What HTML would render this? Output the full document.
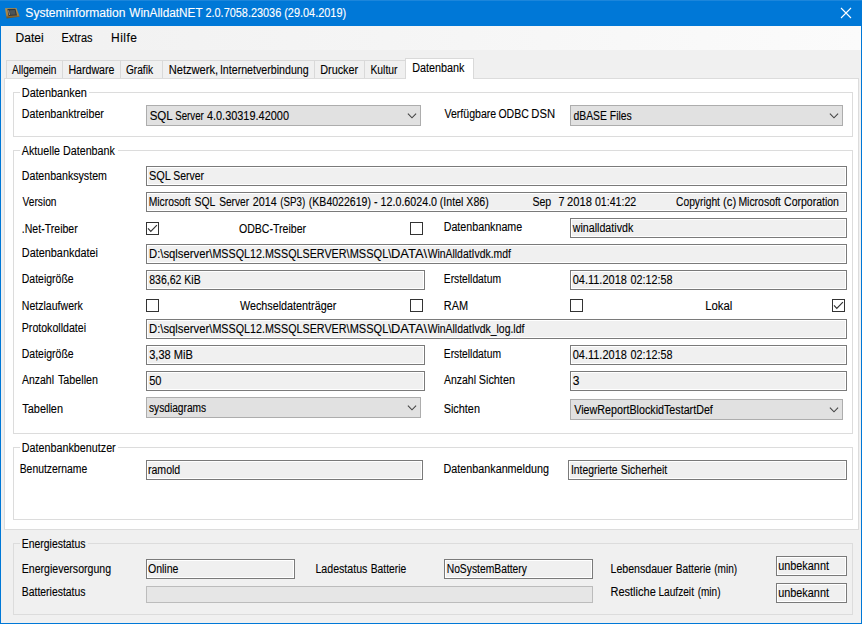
<!DOCTYPE html>
<html><head><meta charset="utf-8"><title>Systeminformation WinAlldatNET</title><style>html,body{margin:0;padding:0}body{width:862px;height:624px;overflow:hidden;position:relative;font-family:"Liberation Sans",sans-serif;background:#f0f0f0}
div,svg,.t{position:absolute;box-sizing:content-box}
.t{white-space:pre;line-height:16px;height:16px;transform-origin:0 0;display:block;-webkit-text-stroke:0.12px currentColor}</style></head><body>
<div style="left:0px;top:0px;width:862px;height:624px;background:#f0f0f0;"></div>
<div style="left:0px;top:0px;width:862px;height:26px;background:#0078d7;"></div>
<div style="left:0px;top:0px;width:862px;height:1px;background:#1c86db;"></div>
<div style="left:1px;top:26px;width:860px;height:24px;background:linear-gradient(to right,#f1f1f1 0,#f5f5f5 45%,#fbfbfb 100%);"></div>
<div style="left:0px;top:26px;width:1px;height:598px;background:#0078d7;"></div>
<div style="left:861px;top:26px;width:1px;height:598px;background:#0078d7;"></div>
<div style="left:0px;top:623px;width:862px;height:1px;background:#0078d7;"></div>
<svg style="left:3px;top:6px" width="18" height="14" viewBox="3 6 18 14"><defs><linearGradient id="ig" x1="0" y1="0" x2="0" y2="1"><stop offset="0" stop-color="#b49354"/><stop offset=".7" stop-color="#a47f40"/><stop offset=".85" stop-color="#7d5e2c"/><stop offset="1" stop-color="#6b4f22"/></linearGradient></defs><polygon points="5.0,8.3 16.4,7.9 19.7,16.8 6.6,18.4" fill="url(#ig)"/><polygon points="7.4,9.1 15.5,8.8 17.0,15.5 8.5,16.1" fill="#33373b"/><polygon points="9.8,10.2 14.8,10.0 15.6,14.4 10.4,14.8" fill="#4c5458"/><polygon points="8.3,10.4 9.0,10.3 9.8,15.0 9.1,15.1" fill="#d8dce0" opacity=".7"/></svg>
<svg style="left:838px;top:5px" width="16" height="16" viewBox="838 5 16 16"><path d="M841 8 L851 18 M851 8 L841 18" stroke="#fff" stroke-width="1.1" fill="none"/></svg>
<div style="left:4px;top:78px;width:853px;height:450px;background:#fff;border:1px solid #dcdcdc;"></div>
<div style="left:6px;top:60px;width:399px;height:17px;border:1px solid #d9d9d9;border-bottom:none;background:#f0f0f0;"></div>
<div style="left:62px;top:61px;width:1px;height:17px;background:#d9d9d9;"></div>
<div style="left:120px;top:61px;width:1px;height:17px;background:#d9d9d9;"></div>
<div style="left:162px;top:61px;width:1px;height:17px;background:#d9d9d9;"></div>
<div style="left:314px;top:61px;width:1px;height:17px;background:#d9d9d9;"></div>
<div style="left:364px;top:61px;width:1px;height:17px;background:#d9d9d9;"></div>
<div style="left:405px;top:58px;width:67px;height:20px;border:1px solid #d9d9d9;border-bottom:none;background:#fff;"></div>
<div style="left:13px;top:92px;width:838px;height:43px;border:1px solid #dcdcdc;"></div>
<div style="left:20px;top:92px;width:69px;height:1px;background:#fff;"></div>
<div style="left:146px;top:105px;width:273px;height:19px;border:1px solid #adadad;background:#e1e1e1;"></div>
<svg style="left:406px;top:111px" width="12" height="10" viewBox="0 0 12 10"><path d="M1.9 2.6 L6 6.8 L10.1 2.6" fill="none" stroke="#444" stroke-width="1.1"/></svg>
<div style="left:570px;top:105px;width:271px;height:19px;border:1px solid #adadad;background:#e1e1e1;"></div>
<svg style="left:828px;top:111px" width="12" height="10" viewBox="0 0 12 10"><path d="M1.9 2.6 L6 6.8 L10.1 2.6" fill="none" stroke="#444" stroke-width="1.1"/></svg>
<div style="left:13px;top:150px;width:838px;height:282px;border:1px solid #dcdcdc;"></div>
<div style="left:20px;top:150px;width:98px;height:1px;background:#fff;"></div>
<div style="left:146px;top:166px;width:699px;height:18px;border:1px solid #7a7a7a;background:#f0f0f0;box-shadow:inset 0 0 0 1px #fff;"></div>
<div style="left:146px;top:192px;width:699px;height:18px;border:1px solid #7a7a7a;background:#f0f0f0;box-shadow:inset 0 0 0 1px #fff;"></div>
<div style="left:146px;top:222px;width:11px;height:11px;border:1px solid #333;background:#fff;"></div>
<svg style="left:146px;top:222px" width="13" height="13" viewBox="0 0 13 13"><path d="M2.0 6.3 L4.8 9.3 L10.9 3.2" fill="none" stroke="#333" stroke-width="1.2"/></svg>
<div style="left:410px;top:222px;width:11px;height:11px;border:1px solid #333;background:#fff;"></div>
<div style="left:570px;top:218px;width:275px;height:18px;border:1px solid #7a7a7a;background:#f0f0f0;box-shadow:inset 0 0 0 1px #fff;"></div>
<div style="left:146px;top:244px;width:699px;height:18px;border:1px solid #7a7a7a;background:#f0f0f0;box-shadow:inset 0 0 0 1px #fff;"></div>
<div style="left:146px;top:270px;width:277px;height:18px;border:1px solid #7a7a7a;background:#f0f0f0;box-shadow:inset 0 0 0 1px #fff;"></div>
<div style="left:570px;top:270px;width:275px;height:18px;border:1px solid #7a7a7a;background:#f0f0f0;box-shadow:inset 0 0 0 1px #fff;"></div>
<div style="left:146px;top:299px;width:11px;height:11px;border:1px solid #333;background:#fff;"></div>
<div style="left:410px;top:299px;width:11px;height:11px;border:1px solid #333;background:#fff;"></div>
<div style="left:570px;top:299px;width:11px;height:11px;border:1px solid #333;background:#fff;"></div>
<div style="left:832px;top:299px;width:11px;height:11px;border:1px solid #333;background:#fff;"></div>
<svg style="left:832px;top:299px" width="13" height="13" viewBox="0 0 13 13"><path d="M2.0 6.3 L4.8 9.3 L10.9 3.2" fill="none" stroke="#333" stroke-width="1.2"/></svg>
<div style="left:146px;top:319px;width:699px;height:18px;border:1px solid #7a7a7a;background:#f0f0f0;box-shadow:inset 0 0 0 1px #fff;"></div>
<div style="left:146px;top:345px;width:277px;height:18px;border:1px solid #7a7a7a;background:#f0f0f0;box-shadow:inset 0 0 0 1px #fff;"></div>
<div style="left:570px;top:345px;width:275px;height:18px;border:1px solid #7a7a7a;background:#f0f0f0;box-shadow:inset 0 0 0 1px #fff;"></div>
<div style="left:146px;top:371px;width:277px;height:18px;border:1px solid #7a7a7a;background:#f0f0f0;box-shadow:inset 0 0 0 1px #fff;"></div>
<div style="left:570px;top:371px;width:275px;height:18px;border:1px solid #7a7a7a;background:#f0f0f0;box-shadow:inset 0 0 0 1px #fff;"></div>
<div style="left:146px;top:397px;width:273px;height:19px;border:1px solid #adadad;background:#e1e1e1;"></div>
<svg style="left:406px;top:403px" width="12" height="10" viewBox="0 0 12 10"><path d="M1.9 2.6 L6 6.8 L10.1 2.6" fill="none" stroke="#444" stroke-width="1.1"/></svg>
<div style="left:570px;top:399px;width:271px;height:19px;border:1px solid #adadad;background:#e1e1e1;"></div>
<svg style="left:828px;top:405px" width="12" height="10" viewBox="0 0 12 10"><path d="M1.9 2.6 L6 6.8 L10.1 2.6" fill="none" stroke="#444" stroke-width="1.1"/></svg>
<div style="left:13px;top:447px;width:838px;height:71px;border:1px solid #dcdcdc;"></div>
<div style="left:20px;top:447px;width:98px;height:1px;background:#fff;"></div>
<div style="left:146px;top:460px;width:275px;height:18px;border:1px solid #7a7a7a;background:#f0f0f0;box-shadow:inset 0 0 0 1px #fff;"></div>
<div style="left:568px;top:460px;width:277px;height:18px;border:1px solid #7a7a7a;background:#f0f0f0;box-shadow:inset 0 0 0 1px #fff;"></div>
<div style="left:13px;top:543px;width:838px;height:70px;border:1px solid #dcdcdc;"></div>
<div style="left:20px;top:543px;width:68px;height:1px;background:#f0f0f0;"></div>
<div style="left:146px;top:559px;width:147px;height:18px;border:1px solid #7a7a7a;background:#f0f0f0;box-shadow:inset 0 0 0 1px #fff;"></div>
<div style="left:444px;top:559px;width:147px;height:18px;border:1px solid #7a7a7a;background:#f0f0f0;box-shadow:inset 0 0 0 1px #fff;"></div>
<div style="left:776px;top:556px;width:69px;height:18px;border:1px solid #7a7a7a;background:#f0f0f0;box-shadow:inset 0 0 0 1px #fff;"></div>
<div style="left:146px;top:586px;width:445px;height:15px;border:1px solid #bcbcbc;background:#e6e6e6;"></div>
<div style="left:776px;top:583px;width:69px;height:18px;border:1px solid #7a7a7a;background:#f0f0f0;box-shadow:inset 0 0 0 1px #fff;"></div>
<span class="t" id="t0" style="left:25px;font-size:12px;color:#fff;top:5px;transform:translateX(0.34px) scaleX(1.0080);">Systeminformation</span>
<span class="t" id="t1" style="left:129px;font-size:12px;color:#fff;top:5px;transform:translateX(0.25px) scaleX(0.9834);">WinAlldatNET</span>
<span class="t" id="t2" style="left:205px;font-size:12px;color:#fff;top:5px;transform:translateX(0.44px) scaleX(0.9088);">2.0.7058.23036</span>
<span class="t" id="t3" style="left:284px;font-size:12px;color:#fff;top:5px;transform:translateX(0.24px) scaleX(0.9091);">(29.04.2019)</span>
<span class="t" id="t4" style="left:15px;font-size:12px;color:#000;top:30px;transform:translateX(0.55px) scaleX(1.0027);">Datei</span>
<span class="t" id="t5" style="left:61px;font-size:12px;color:#000;top:30px;transform:translateX(0.56px) scaleX(0.9114);">Extras</span>
<span class="t" id="t6" style="left:111px;font-size:12px;color:#000;letter-spacing:0.45px;top:30px;transform:translateX(0.03px) scaleX(1.0005);">Hilfe</span>
<span class="t" id="t7" style="left:11px;font-size:12.5px;color:#000;top:62px;transform:translateX(0.95px) scaleX(0.8109);">Allgemein</span>
<span class="t" id="t8" style="left:68px;font-size:12.5px;color:#000;top:62px;transform:translateX(0.43px) scaleX(0.8496);">Hardware</span>
<span class="t" id="t9" style="left:125px;font-size:12.5px;color:#000;top:62px;transform:translateX(0.94px) scaleX(0.8100);">Grafik</span>
<span class="t" id="t10" style="left:168px;font-size:12.5px;color:#000;top:62px;transform:translateX(0.67px) scaleX(0.8909);">Netzwerk,</span>
<span class="t" id="t11" style="left:219px;font-size:12.5px;color:#000;top:62px;transform:translateX(0.88px) scaleX(0.8521);">Internetverbindung</span>
<span class="t" id="t12" style="left:320px;font-size:12.5px;color:#000;top:62px;transform:translateX(0.18px) scaleX(0.8689);">Drucker</span>
<span class="t" id="t13" style="left:370px;font-size:12.5px;color:#000;top:62px;transform:translateX(0.43px) scaleX(0.8276);">Kultur</span>
<span class="t" id="t14" style="left:412px;font-size:12.5px;color:#000;top:60px;transform:translateX(0.19px) scaleX(0.8643);">Datenbank</span>
<span class="t" id="t15" style="left:21px;font-size:12.5px;color:#000;top:85px;transform:translateX(0.78px) scaleX(0.8758);">Datenbanken</span>
<span class="t" id="t16" style="left:21px;font-size:12.5px;color:#000;top:106px;transform:translateX(0.79px) scaleX(0.8567);">Datenbanktreiber</span>
<span class="t" id="t17" style="left:149px;font-size:12.5px;color:#000;top:108px;transform:translateX(0.63px) scaleX(0.9226);">SQL</span>
<span class="t" id="t18" style="left:175px;font-size:12.5px;color:#000;top:108px;transform:translateX(0.24px) scaleX(0.7757);">Server</span>
<span class="t" id="t19" style="left:206px;font-size:12.5px;color:#000;top:108px;transform:translateX(0.90px) scaleX(0.8744);">4.0.30319.42000</span>
<span class="t" id="t20" style="left:444px;font-size:12.5px;color:#000;top:106px;transform:translateX(0.45px) scaleX(0.8469);">Verfügbare</span>
<span class="t" id="t21" style="left:498px;font-size:12.5px;color:#000;top:106px;transform:translateX(0.43px) scaleX(0.8424);">ODBC</span>
<span class="t" id="t22" style="left:531px;font-size:12.5px;color:#000;top:106px;transform:translateX(0.25px) scaleX(0.9016);">DSN</span>
<span class="t" id="t23" style="left:573px;font-size:12.5px;color:#000;top:108px;transform:translateX(0.45px) scaleX(0.8302);">dBASE Files</span>
<span class="t" id="t24" style="left:21px;font-size:12.5px;color:#000;top:143px;transform:translateX(0.85px) scaleX(0.8579);">Aktuelle Datenbank</span>
<span class="t" id="t25" style="left:21px;font-size:12.5px;color:#000;top:168px;transform:translateX(0.79px) scaleX(0.8507);">Datenbanksystem</span>
<span class="t" id="t26" style="left:148px;font-size:12.5px;color:#000;top:168px;transform:translateX(0.93px) scaleX(0.8748);">SQL</span>
<span class="t" id="t27" style="left:173px;font-size:12.5px;color:#000;top:168px;transform:translateX(0.24px) scaleX(0.8382);">Server</span>
<span class="t" id="t28" style="left:22px;font-size:12.5px;color:#000;top:194px;transform:translateX(0.55px) scaleX(0.8132);">Version</span>
<span class="t" id="t29" style="left:148px;font-size:12.5px;color:#000;top:194px;transform:translateX(0.69px) scaleX(0.8257);">Microsoft</span>
<span class="t" id="t30" style="left:194px;font-size:12.5px;color:#000;top:194px;transform:translateX(0.53px) scaleX(0.8345);">SQL</span>
<span class="t" id="t31" style="left:219px;font-size:12.5px;color:#000;top:194px;transform:translateX(0.14px) scaleX(0.8164);">Server</span>
<span class="t" id="t32" style="left:252px;font-size:12.5px;color:#000;top:194px;transform:translateX(0.73px) scaleX(0.8620);">2014</span>
<span class="t" id="t33" style="left:280px;font-size:12.5px;color:#000;top:194px;transform:translateX(0.32px) scaleX(0.7809);">(SP3)</span>
<span class="t" id="t34" style="left:308px;font-size:12.5px;color:#000;top:194px;transform:translateX(0.84px) scaleX(0.8426);">(KB4022619)</span>
<span class="t" id="t35" style="left:374px;font-size:12.5px;color:#000;top:194px;transform:translateX(0.09px) scaleX(0.8546);">- 12.0.6024.0</span>
<span class="t" id="t36" style="left:439px;font-size:12.5px;color:#000;top:194px;transform:translateX(0.83px) scaleX(0.8478);">(Intel X86)</span>
<span class="t" id="t37" style="left:532px;font-size:12.5px;color:#000;top:194px;transform:translateX(0.42px) scaleX(0.8471);">Sep</span>
<span class="t" id="t38" style="left:558px;font-size:12.5px;color:#000;top:194px;transform:translateX(0.41px) scaleX(0.8642);">7</span>
<span class="t" id="t39" style="left:567px;font-size:12.5px;color:#000;top:194px;transform:translateX(0.03px) scaleX(0.8931);">2018</span>
<span class="t" id="t40" style="left:594px;font-size:12.5px;color:#000;top:194px;transform:translateX(0.89px) scaleX(0.8499);">01:41:22</span>
<span class="t" id="t41" style="left:676px;font-size:12.5px;color:#000;top:194px;transform:translateX(0.04px) scaleX(0.8207);">Copyright</span>
<span class="t" id="t42" style="left:723px;font-size:12.5px;color:#000;top:194px;transform:translateX(0.09px) scaleX(0.9001);">(c)</span>
<span class="t" id="t43" style="left:738px;font-size:12.5px;color:#000;top:194px;transform:translateX(0.38px) scaleX(0.8356);">Microsoft</span>
<span class="t" id="t44" style="left:784px;font-size:12.5px;color:#000;top:194px;transform:translateX(0.04px) scaleX(0.8408);">Corporation</span>
<span class="t" id="t45" style="left:21px;font-size:12.5px;color:#000;top:221px;transform:translateX(0.79px) scaleX(0.8451);">.Net-Treiber</span>
<span class="t" id="t46" style="left:238px;font-size:12.5px;color:#000;top:221px;transform:translateX(0.94px) scaleX(0.8456);">ODBC-Treiber</span>
<span class="t" id="t47" style="left:443px;font-size:12.5px;color:#000;top:219px;transform:translateX(0.69px) scaleX(0.8560);">Datenbankname</span>
<span class="t" id="t48" style="left:572px;font-size:12.5px;color:#000;top:220px;transform:translateX(0.75px) scaleX(0.8536);">winalldativdk</span>
<span class="t" id="t49" style="left:21px;font-size:12.5px;color:#000;top:245px;transform:translateX(0.78px) scaleX(0.8699);">Datenbankdatei</span>
<span class="t" id="t50" style="left:148px;font-size:12.5px;color:#000;top:246px;transform:translateX(0.99px) scaleX(0.9031);">D:\sqlserver\</span>
<span class="t" id="t51" style="left:212px;font-size:12.5px;color:#000;top:246px;transform:translateX(0.40px) scaleX(0.8589);">MSSQL12.MSSQLSERVER\</span>
<span class="t" id="t52" style="left:349px;font-size:12.5px;color:#000;top:246px;transform:translateX(0.68px) scaleX(0.8819);">MSSQL\</span>
<span class="t" id="t53" style="left:391px;font-size:12.5px;color:#000;top:246px;transform:translateX(0.02px) scaleX(1.0331);">DATA\</span>
<span class="t" id="t54" style="left:427px;font-size:12.5px;color:#000;top:246px;transform:translateX(0.65px) scaleX(0.8318);">WinAlldatIvdk.mdf</span>
<span class="t" id="t55" style="left:21px;font-size:12.5px;color:#000;top:271px;transform:translateX(0.78px) scaleX(0.8389);">Dateigröße</span>
<span class="t" id="t56" style="left:149px;font-size:12.5px;color:#000;top:272px;transform:translateX(0.20px) scaleX(0.8413);">836,62 KiB</span>
<span class="t" id="t57" style="left:443px;font-size:12.5px;color:#000;top:271px;transform:translateX(0.78px) scaleX(0.8237);">Erstelldatum</span>
<span class="t" id="t58" style="left:572px;font-size:12.5px;color:#000;top:272px;transform:translateX(0.70px) scaleX(0.8786);">04.11.2018</span>
<span class="t" id="t59" style="left:630px;font-size:12.5px;color:#000;top:272px;transform:translateX(0.39px) scaleX(0.8643);">02:12:58</span>
<span class="t" id="t60" style="left:21px;font-size:12.5px;color:#000;top:298px;transform:translateX(0.79px) scaleX(0.8451);">Netzlaufwerk</span>
<span class="t" id="t61" style="left:239px;font-size:12.5px;color:#000;top:298px;transform:translateX(0.95px) scaleX(0.8630);">Wechseldatenträger</span>
<span class="t" id="t62" style="left:443px;font-size:12.5px;color:#000;top:298px;transform:translateX(0.75px) scaleX(0.8748);">RAM</span>
<span class="t" id="t63" style="left:705px;font-size:12.5px;color:#000;top:298px;transform:translateX(0.15px) scaleX(0.9095);">Lokal</span>
<span class="t" id="t64" style="left:21px;font-size:12.5px;color:#000;top:320px;transform:translateX(0.78px) scaleX(0.8480);">Protokolldatei</span>
<span class="t" id="t65" style="left:148px;font-size:12.5px;color:#000;top:321px;transform:translateX(0.99px) scaleX(0.9031);">D:\sqlserver\</span>
<span class="t" id="t66" style="left:212px;font-size:12.5px;color:#000;top:321px;transform:translateX(0.40px) scaleX(0.8589);">MSSQL12.MSSQLSERVER\</span>
<span class="t" id="t67" style="left:349px;font-size:12.5px;color:#000;top:321px;transform:translateX(0.68px) scaleX(0.8819);">MSSQL\</span>
<span class="t" id="t68" style="left:391px;font-size:12.5px;color:#000;top:321px;transform:translateX(0.02px) scaleX(1.0331);">DATA\</span>
<span class="t" id="t69" style="left:427px;font-size:12.5px;color:#000;top:321px;transform:translateX(0.65px) scaleX(0.8334);">WinAlldatIvdk_log.ldf</span>
<span class="t" id="t70" style="left:21px;font-size:12.5px;color:#000;top:346px;transform:translateX(0.78px) scaleX(0.8389);">Dateigröße</span>
<span class="t" id="t71" style="left:149px;font-size:12.5px;color:#000;top:347px;transform:translateX(0.19px) scaleX(0.8869);">3,38 MiB</span>
<span class="t" id="t72" style="left:443px;font-size:12.5px;color:#000;top:346px;transform:translateX(0.78px) scaleX(0.8237);">Erstelldatum</span>
<span class="t" id="t73" style="left:572px;font-size:12.5px;color:#000;top:347px;transform:translateX(0.70px) scaleX(0.8786);">04.11.2018</span>
<span class="t" id="t74" style="left:630px;font-size:12.5px;color:#000;top:347px;transform:translateX(0.39px) scaleX(0.8643);">02:12:58</span>
<span class="t" id="t75" style="left:22px;font-size:12.5px;color:#000;top:372px;transform:translateX(0.05px) scaleX(0.8360);">Anzahl</span>
<span class="t" id="t76" style="left:57px;font-size:12.5px;color:#000;top:372px;transform:translateX(0.99px) scaleX(0.8582);">Tabellen</span>
<span class="t" id="t77" style="left:149px;font-size:12.5px;color:#000;top:373px;transform:translateX(0.18px) scaleX(0.8847);">50</span>
<span class="t" id="t78" style="left:444px;font-size:12.5px;color:#000;top:372px;transform:translateX(0.05px) scaleX(0.8360);">Anzahl</span>
<span class="t" id="t79" style="left:478px;font-size:12.5px;color:#000;top:372px;transform:translateX(0.83px) scaleX(0.8654);">Sichten</span>
<span class="t" id="t80" style="left:572px;font-size:12.5px;color:#000;top:373px;transform:translateX(0.65px) scaleX(0.9600);">3</span>
<span class="t" id="t81" style="left:22px;font-size:12.5px;color:#000;top:401px;transform:translateX(0.29px) scaleX(0.8742);">Tabellen</span>
<span class="t" id="t82" style="left:148px;font-size:12.5px;color:#000;top:400px;transform:translateX(0.95px) scaleX(0.8159);">sysdiagrams</span>
<span class="t" id="t83" style="left:443px;font-size:12.5px;color:#000;top:401px;transform:translateX(0.64px) scaleX(0.8714);">Sichten</span>
<span class="t" id="t84" style="left:574px;font-size:12.5px;color:#000;top:402px;transform:translateX(0.25px) scaleX(0.8574);">ViewReportBlockidTestartDef</span>
<span class="t" id="t85" style="left:21px;font-size:12.5px;color:#000;top:440px;transform:translateX(0.79px) scaleX(0.8607);">Datenbankbenutzer</span>
<span class="t" id="t86" style="left:19px;font-size:12.5px;color:#000;top:461px;transform:translateX(0.68px) scaleX(0.8311);">Benutzername</span>
<span class="t" id="t87" style="left:147px;font-size:12.5px;color:#000;top:462px;transform:translateX(0.93px) scaleX(0.8453);">ramold</span>
<span class="t" id="t88" style="left:443px;font-size:12.5px;color:#000;top:461px;transform:translateX(0.59px) scaleX(0.8610);">Datenbankanmeldung</span>
<span class="t" id="t89" style="left:570px;font-size:12.5px;color:#000;top:462px;transform:translateX(0.97px) scaleX(0.8278);">Integrierte</span>
<span class="t" id="t90" style="left:620px;font-size:12.5px;color:#000;top:462px;transform:translateX(0.84px) scaleX(0.8347);">Sicherheit</span>
<span class="t" id="t91" style="left:21px;font-size:12.5px;color:#000;top:536px;transform:translateX(0.79px) scaleX(0.8336);">Energiestatus</span>
<span class="t" id="t92" style="left:21px;font-size:12.5px;color:#000;top:561px;transform:translateX(0.79px) scaleX(0.8447);">Energieversorgung</span>
<span class="t" id="t93" style="left:147px;font-size:12.5px;color:#000;top:561px;transform:translateX(0.93px) scaleX(0.8449);">Online</span>
<span class="t" id="t94" style="left:315px;font-size:12.5px;color:#000;top:561px;transform:translateX(0.43px) scaleX(0.8496);">Ladestatus</span>
<span class="t" id="t95" style="left:370px;font-size:12.5px;color:#000;top:561px;transform:translateX(0.67px) scaleX(0.8249);">Batterie</span>
<span class="t" id="t96" style="left:446px;font-size:12.5px;color:#000;top:561px;transform:translateX(0.69px) scaleX(0.8251);">NoSystemBattery</span>
<span class="t" id="t97" style="left:610px;font-size:12.5px;color:#000;top:561px;transform:translateX(0.49px) scaleX(0.8483);">Lebensdauer</span>
<span class="t" id="t98" style="left:675px;font-size:12.5px;color:#000;top:561px;transform:translateX(0.77px) scaleX(0.8167);">Batterie</span>
<span class="t" id="t99" style="left:714px;font-size:12.5px;color:#000;top:561px;transform:translateX(0.23px) scaleX(0.8027);">(min)</span>
<span class="t" id="t100" style="left:778px;font-size:12.5px;color:#000;top:558px;transform:translateX(0.19px) scaleX(0.8692);">unbekannt</span>
<span class="t" id="t101" style="left:21px;font-size:12.5px;color:#000;top:584px;transform:translateX(0.79px) scaleX(0.8336);">Batteriestatus</span>
<span class="t" id="t102" style="left:610px;font-size:12.5px;color:#000;top:584px;transform:translateX(0.48px) scaleX(0.8807);">Restliche</span>
<span class="t" id="t103" style="left:658px;font-size:12.5px;color:#000;top:584px;transform:translateX(0.38px) scaleX(0.8124);">Laufzeit</span>
<span class="t" id="t104" style="left:697px;font-size:12.5px;color:#000;top:584px;transform:translateX(0.72px) scaleX(0.7990);">(min)</span>
<span class="t" id="t105" style="left:778px;font-size:12.5px;color:#000;top:585px;transform:translateX(0.19px) scaleX(0.8692);">unbekannt</span>
</body></html>
